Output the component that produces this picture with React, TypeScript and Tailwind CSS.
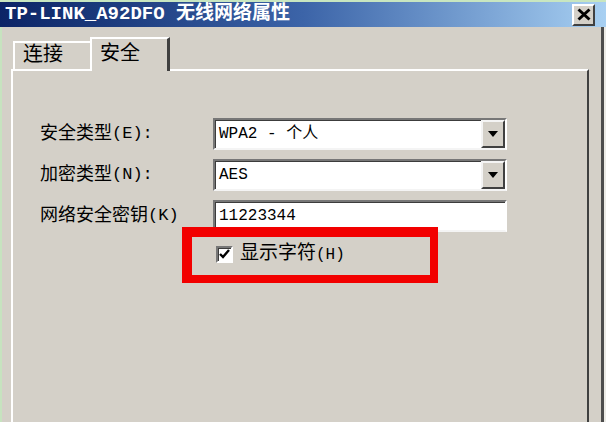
const MONO = "font-['Liberation_Mono','Noto_Sans_CJK_SC',monospace]";
const LATIN = "font-['Liberation_Mono',monospace]";

function Combo({ value, arrow = true }: { value: string; arrow?: boolean }) {
  return (
    <div className="flex h-[32px] items-stretch border-2 border-t-[#777] border-l-[#777] border-r-white border-b-[#f4f4f4] bg-white shadow-[inset_1px_1px_0_#3c3c3c]">
      <span className={`flex flex-1 items-center pl-[4px] text-[16px] text-black ${MONO}`}>{value}</span>
      {arrow && (
        <span className="flex w-[24px] items-center justify-center border-2 border-t-[#f4f4f4] border-l-[#f4f4f4] border-r-[#404040] border-b-[#404040] bg-[#d4d0c8]">
          <svg width="10" height="6" viewBox="0 0 10 6">
            <path d="M0 0h10L5 6z" fill="#000" />
          </svg>
        </span>
      )}
    </div>
  );
}

function Label({ cjk, key_ }: { cjk: string; key_: string }) {
  return (
    <div className="flex h-[32px] items-center">
      <span>{cjk}</span>
      <span className={`text-[17px] ${LATIN}`}>{key_}</span>
    </div>
  );
}

export default function App() {
  return (
    <div className="flex h-[422px] w-[606px] flex-col overflow-hidden border-t-2 border-t-[#c8e6c0] bg-[#d4d0c8]">
      {/* Title bar */}
      <div className="flex h-[25px] items-center bg-linear-to-r from-[#0c2466] via-[#3c64a8] to-[#a8d0f2] pl-[5px] pr-[11px]">
        <span className={`text-[19px] font-bold leading-none text-white ${MONO}`}>
          TP-LINK_A92DFO 无线网络属性
        </span>
        <button className="ml-auto flex h-[22px] w-[23px] items-center justify-center border-2 border-t-white border-l-white border-r-[#404040] border-b-[#404040] bg-[#d4d0c8]">
          <svg width="14" height="13" viewBox="0 0 14 13">
            <path d="M1.5 1.5l11 10M12.5 1.5l-11 10" stroke="#000" strokeWidth="3" />
          </svg>
        </button>
      </div>

      {/* Body */}
      <div className="flex flex-1 border-l-2 border-l-[#c6e3bf] border-r-2 border-r-[#ecebe6]">
        <div className="flex flex-1 flex-col border-r-[3px] border-r-[#4d4d4d] pl-[9px] pr-[12px] pt-[10px]">
          {/* Tabs */}
          <div className={`flex h-[32px] items-end pl-[2px] text-[20px] text-black ${MONO}`}>
            <div className="flex h-[28px] w-[77px] items-center border-t-2 border-l-2 border-t-white border-l-white pl-[8px]">
              连接
            </div>
            <div className="relative z-10 -mb-[2px] flex h-[34px] w-[80px] items-center border-t-2 border-l-2 border-r-[3px] border-t-white border-l-white border-r-[#404040] bg-[#d4d0c8] pl-[8px]">
              安全
            </div>
          </div>

          {/* Panel */}
          <div className="relative flex-1 border-t-2 border-l-2 border-r-2 border-t-white border-l-white border-r-[#404040] pl-[27px] pt-[47px]">
            <div className={`grid grid-cols-[173px_294px] gap-y-[9px] text-[18px] text-black ${MONO}`}>
              <Label cjk="安全类型" key_="(E):" />
              <Combo value="WPA2 - 个人" />
              <Label cjk="加密类型" key_="(N):" />
              <Combo value="AES" />
              <Label cjk="网络安全密钥" key_="(K)" />
              <Combo value="11223344" arrow={false} />
              <div />
              <div className="mt-[3px] ml-[3px] flex h-[20px] items-center gap-[7px]">
                <span className="flex h-[17px] w-[17px] items-center justify-center border-2 border-t-[#777] border-l-[#777] border-r-white border-b-white bg-white shadow-[inset_1px_1px_0_#3c3c3c]">
                  <svg width="11" height="10" viewBox="0 0 11 10">
                    <path d="M1 5l3 3 6-7" stroke="#000" strokeWidth="2.4" fill="none" />
                  </svg>
                </span>
                <span className="text-[19px]">
                  显示字符<span className={`text-[16px] ${LATIN}`}>(H)</span>
                </span>
              </div>
            </div>

            {/* Red highlight annotation */}
            <div className="pointer-events-none absolute left-[169px] top-[156px] h-[56px] w-[256px] border-[10px] border-r-[8px] border-b-[8px] border-[#f20000]" />
          </div>
        </div>
      </div>
    </div>
  );
}
